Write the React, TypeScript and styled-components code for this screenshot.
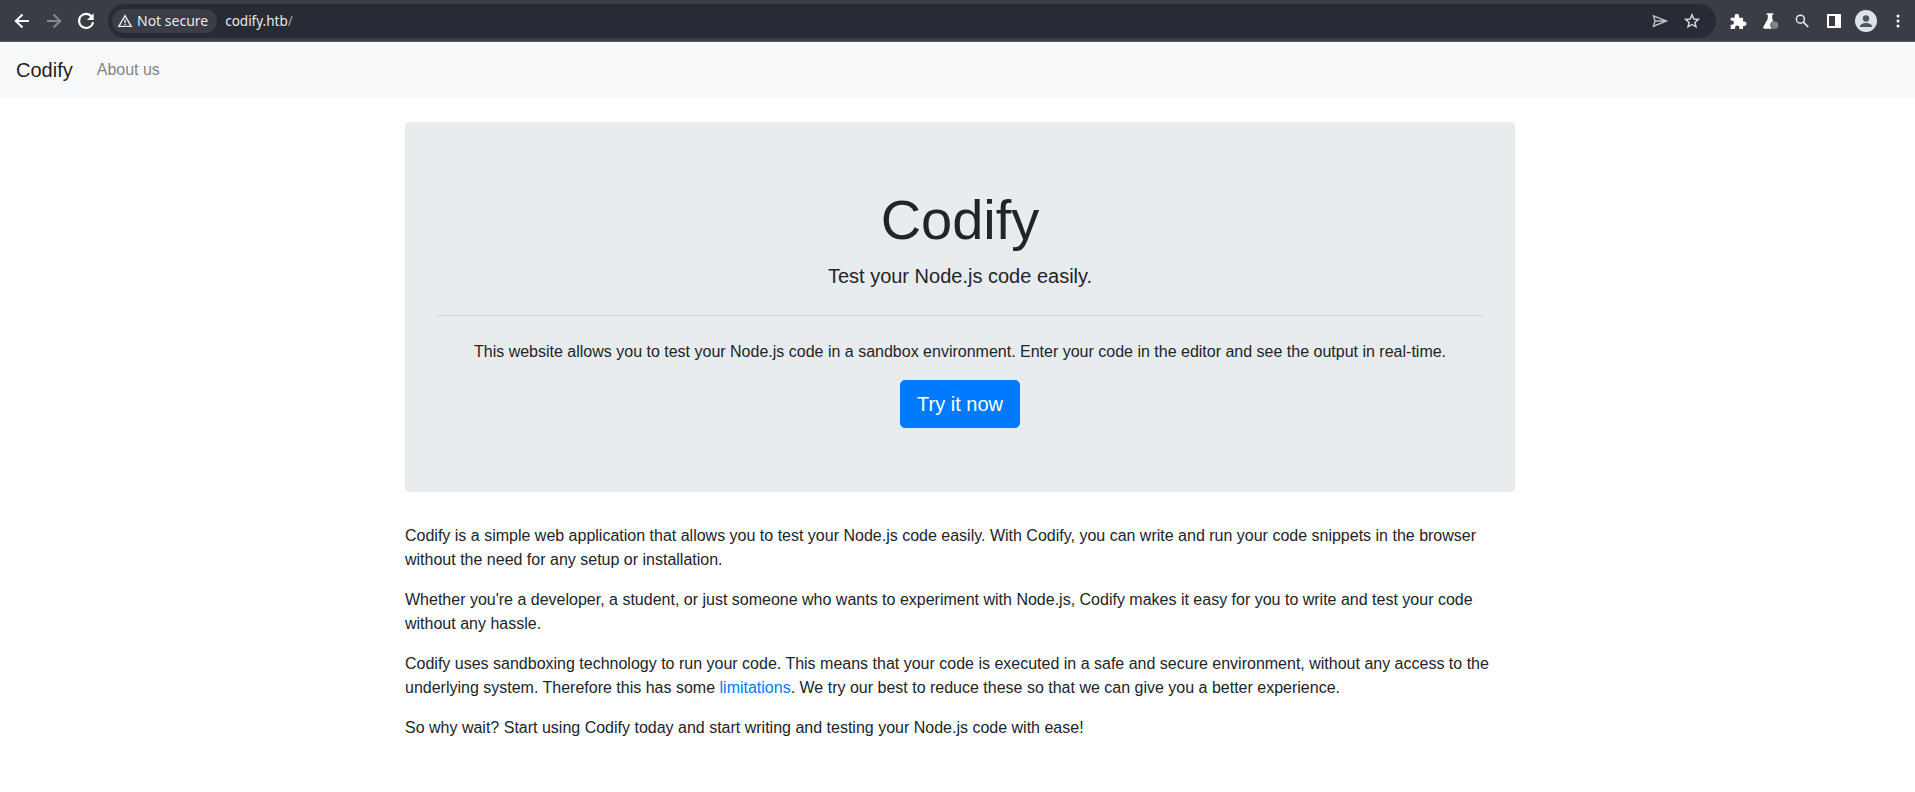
import React, { FC } from 'react';
import styled, { createGlobalStyle } from 'styled-components';

const GlobalStyle = createGlobalStyle`
    html, body {
        margin: 0;
        padding: 0;
        background: #fff;
    }
    body {
        font-family: "Liberation Sans", Arial, sans-serif;
        font-size: 16px;
        line-height: 1.5;
        color: #212529;
    }
`;

const Toolbar = styled.div`
    height: 41px;
    border-bottom: 1px solid #55585e;
    background: #3a3d45;
    display: flex;
    align-items: center;
    padding-left: 6px;
`;

const ToolButton = styled.div`
    width: 32px;
    height: 32px;
    flex: none;
    display: flex;
    align-items: center;
    justify-content: center;
`;

const Omnibox = styled.div`
    flex: none;
    width: 1608px;
    height: 34px;
    margin-left: 6px;
    margin-right: 6px;
    border-radius: 17px;
    background: #282a35;
    display: flex;
    align-items: center;
    padding: 0 8px 0 4px;
    box-sizing: border-box;
    font-family: "Noto Sans", "Open Sans", sans-serif;
`;

const SecurityChip = styled.div`
    height: 24px;
    border-radius: 12px;
    background: #3a3d45;
    display: flex;
    align-items: center;
    padding: 0 9px 0 5px;
    gap: 4px;
    color: #e8eaed;
    font-size: 14px;
    line-height: 24px;
    white-space: nowrap;
`;

const Url = styled.div`
    margin-left: 8px;
    flex: 1;
    color: #e8eaed;
    font-size: 13.5px;
    line-height: 24px;

    span {
        color: #9aa0a6;
    }
`;

const Avatar = styled.div`
    width: 22px;
    height: 22px;
    border-radius: 50%;
    background: #dee1e6;
    overflow: hidden;
    display: flex;
`;

const Navbar = styled.nav`
    height: 56px;
    box-sizing: border-box;
    background: #f8f9fa;
    padding: 8px 16px;
    display: flex;
    align-items: center;
`;

const Brand = styled.a`
    font-size: 20px;
    line-height: 30px;
    color: rgba(0, 0, 0, 0.9);
    margin-right: 16px;
`;

const NavLink = styled.a`
    padding: 8px;
    color: rgba(0, 0, 0, 0.5);
`;

const Container = styled.main`
    width: 1110px;
    margin: 24px 0 0 405px;
`;

const Jumbotron = styled.section`
    background: #e9ecef;
    border-radius: 4.8px;
    padding: 64px 32px;
    margin-bottom: 32px;
    text-align: center;
`;

const Title = styled.h1`
    margin: 0 0 8px;
    font-size: 56px;
    font-weight: 300;
    line-height: 1.2;
`;

const Lead = styled.p`
    margin: 0;
    font-size: 20px;
    font-weight: 300;
`;

const Rule = styled.hr`
    margin: 24px 0;
    border: 0;
    border-top: 1px solid rgba(0, 0, 0, 0.1);
`;

const Text = styled.p`
    margin: 0 0 16px;
`;

const TryButton = styled.a`
    display: inline-block;
    vertical-align: top;
    padding: 8px 16px;
    font-size: 20px;
    line-height: 30px;
    border: 1px solid #007bff;
    border-radius: 4.8px;
    background: #007bff;
    color: #fff;
`;

const Link = styled.a`
    color: #007bff;
`;

const BackIcon: FC<{ color: string; flip?: boolean }> = ({ color, flip }) => (
    <svg width="20" height="20" viewBox="0 0 20 20" fill="none" style={flip ? { transform: 'scaleX(-1)' } : undefined}>
        <path d="M17 10H4.5M10.5 3.5L3.8 10l6.7 6.5" stroke={color} strokeWidth="2" />
    </svg>
);

const App: FC = () => {
    return (
        <>
            <GlobalStyle />
            <Toolbar>
                <ToolButton><BackIcon color="#fff" /></ToolButton>
                <ToolButton><BackIcon color="#85888c" flip /></ToolButton>
                <ToolButton>
                    <svg width="22" height="22" viewBox="0 0 20 20" fill="none">
                        <path d="M15.3 6.2A6.4 6.4 0 1 0 16.4 11" stroke="#fff" strokeWidth="1.9" />
                        <path d="M17 3v6h-6z" fill="#fff" />
                    </svg>
                </ToolButton>
                <Omnibox>
                    <SecurityChip>
                        <svg width="16" height="16" viewBox="0 0 16 16" fill="none">
                            <path d="M8 2.6L14.2 13.4H1.8z" stroke="#e8eaed" strokeWidth="1.4" strokeLinejoin="miter" />
                            <path d="M7.3 6.5h1.4v3.6H7.3zM7.3 10.8h1.4v1.3H7.3z" fill="#e8eaed" />
                        </svg>
                        Not secure
                    </SecurityChip>
                    <Url>codify.htb<span>/</span></Url>
                    <ToolButton>
                        <svg width="18" height="18" viewBox="0 0 18 18" fill="none">
                            <path d="M2.5 3.8L15.5 9L2.5 14.2L4 9zM4 9h11" stroke="#bdc1c6" strokeWidth="1.4" />
                        </svg>
                    </ToolButton>
                    <ToolButton>
                        <svg width="18" height="18" viewBox="0 0 18 18" fill="none">
                            <path d="M9 2.8l1.8 4.2 4.6.4-3.5 3 1.1 4.5L9 12.5l-4 2.4 1.1-4.5-3.5-3 4.6-.4z" stroke="#dadce0" strokeWidth="1.4" strokeLinejoin="miter" />
                        </svg>
                    </ToolButton>
                </Omnibox>
                <ToolButton>
                    <svg width="18" height="18" viewBox="0 0 16 16">
                        <path d="M1.5 5H5V3.6a2 2 0 0 1 4 0V5h3.5v3.4h1.1a2 2 0 0 1 0 4h-1.1V15H9.2v-1a1.9 1.9 0 0 0-3.8 0v1H1.5v-3.6h1a1.9 1.9 0 0 0 0-3.8h-1z" fill="#fff" />
                    </svg>
                </ToolButton>
                <ToolButton>
                    <svg width="20" height="20" viewBox="0 0 18 18">
                        <path d="M6 2h6v1.4h-1V7l4 7.4c.4.8 0 1.6-1 1.6H4c-1 0-1.4-.8-1-1.6L7 7V3.4H6z" fill="#fff" />
                        <circle cx="13.2" cy="12.8" r="3.6" fill="#80868b" stroke="#3a3d45" strokeWidth="0.6" />
                    </svg>
                </ToolButton>
                <ToolButton>
                    <svg width="16" height="16" viewBox="0 0 16 16" fill="none">
                        <circle cx="6.4" cy="6.2" r="4" stroke="#e8eaed" strokeWidth="1.5" />
                        <path d="M9.4 9.2l4.8 4.8" stroke="#e8eaed" strokeWidth="1.7" />
                    </svg>
                </ToolButton>
                <ToolButton>
                    <svg width="14" height="14" viewBox="0 0 14 14">
                        <path fillRule="evenodd" d="M0 0h14v14H0zM2 2v10h6V2z" fill="#fff" />
                    </svg>
                </ToolButton>
                <ToolButton>
                    <Avatar>
                        <svg width="22" height="22" viewBox="0 0 22 22">
                            <circle cx="11" cy="8.5" r="3.2" fill="#4b5568" />
                            <path d="M4.8 17c0-2.8 3.4-4 6.2-4s6.2 1.2 6.2 4z" fill="#4b5568" />
                        </svg>
                    </Avatar>
                </ToolButton>
                <ToolButton>
                    <svg width="4" height="14" viewBox="0 0 4 14">
                        <circle cx="2" cy="2" r="1.5" fill="#fff" />
                        <circle cx="2" cy="7" r="1.5" fill="#fff" />
                        <circle cx="2" cy="12" r="1.5" fill="#fff" />
                    </svg>
                </ToolButton>
            </Toolbar>

            <Navbar>
                <Brand>Codify</Brand>
                <NavLink>About us</NavLink>
            </Navbar>

            <Container>
                <Jumbotron>
                    <Title>Codify</Title>
                    <Lead>Test your Node.js code easily.</Lead>
                    <Rule />
                    <Text>This website allows you to test your Node.js code in a sandbox environment. Enter your code in the editor and see the output in real-time.</Text>
                    <TryButton>Try it now</TryButton>
                </Jumbotron>
                <Text>Codify is a simple web application that allows you to test your Node.js code easily. With Codify, you can write and run your code snippets in the browser without the need for any setup or installation.</Text>
                <Text>Whether you're a developer, a student, or just someone who wants to experiment with Node.js, Codify makes it easy for you to write and test your code without any hassle.</Text>
                <Text>Codify uses sandboxing technology to run your code. This means that your code is executed in a safe and secure environment, without any access to the underlying system. Therefore this has some <Link>limitations</Link>. We try our best to reduce these so that we can give you a better experience.</Text>
                <Text>So why wait? Start using Codify today and start writing and testing your Node.js code with ease!</Text>
            </Container>
        </>
    );
};

export default App;
